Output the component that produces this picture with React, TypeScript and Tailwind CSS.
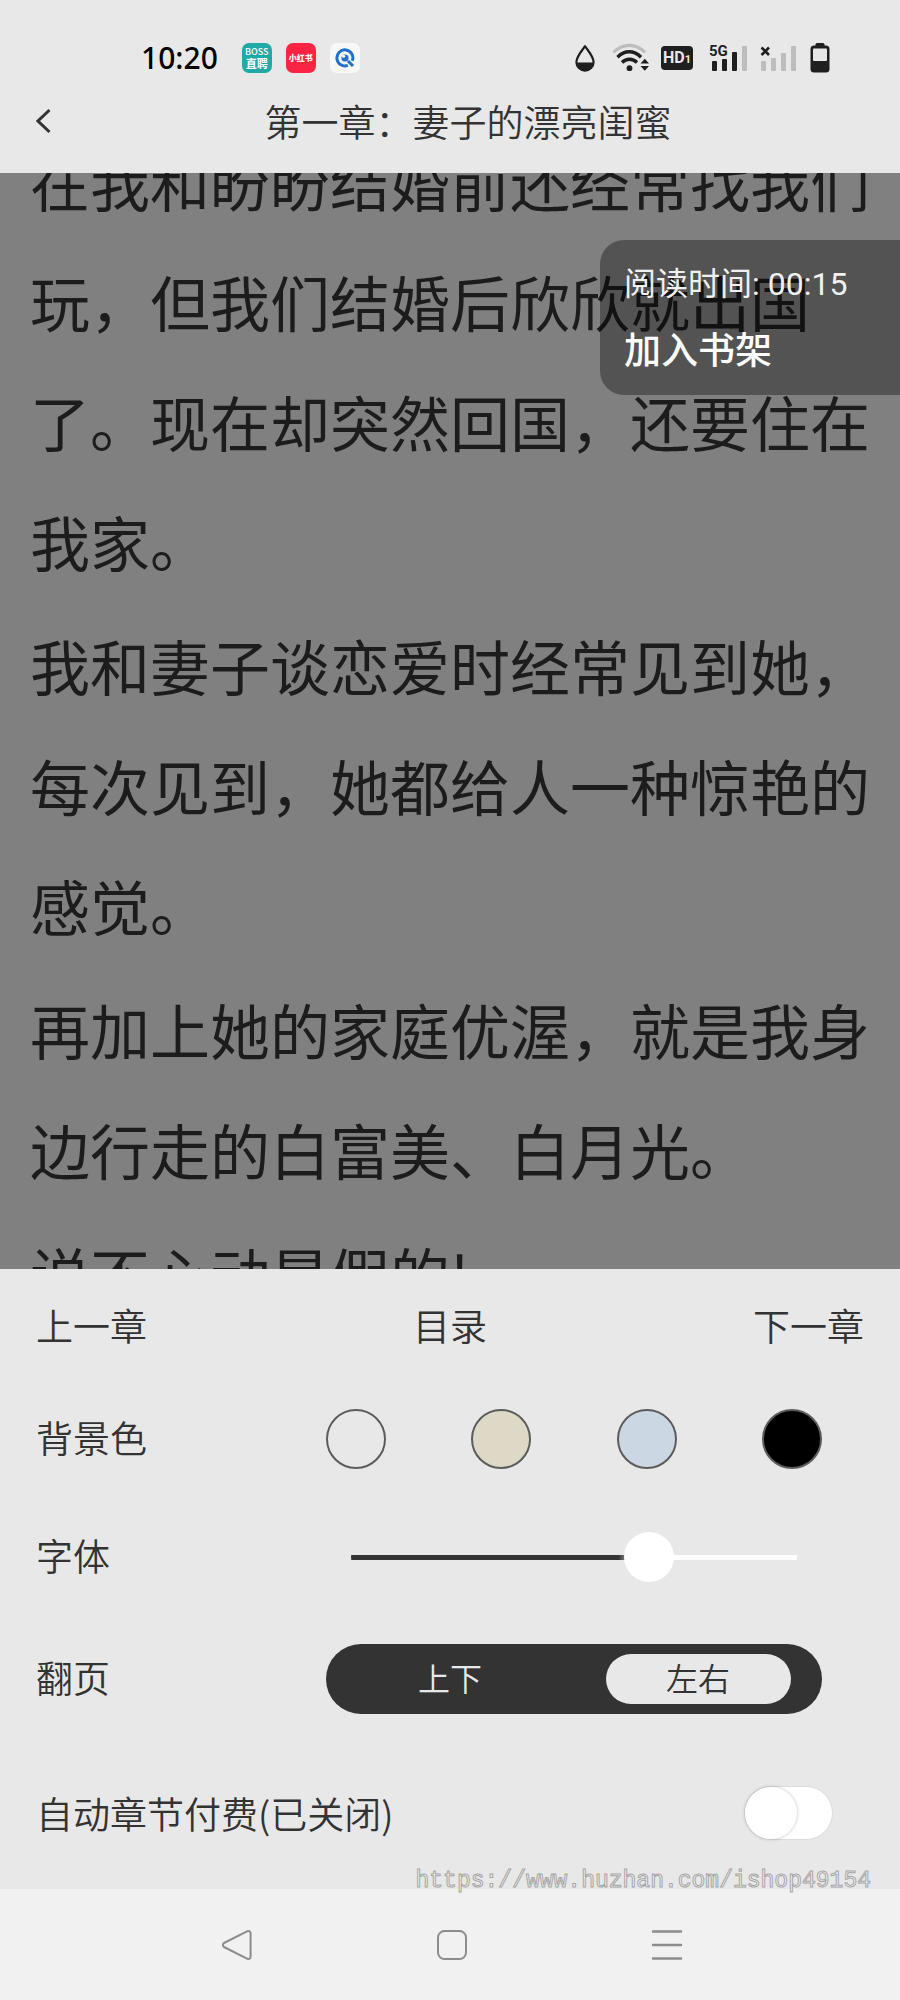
import { useState } from "react";

const paragraphs = [
  "在我和盼盼结婚前还经常找我们玩，但我们结婚后欣欣就出国了。现在却突然回国，还要住在我家。",
  "我和妻子谈恋爱时经常见到她，每次见到，她都给人一种惊艳的感觉。",
  "再加上她的家庭优渥，就是我身边行走的白富美、白月光。",
  "说不心动是假的!",
];

const backgrounds = [
  { name: "默认", className: "bg-[#e8e8e8]" },
  { name: "米色", className: "bg-[#ded9c6]" },
  { name: "浅蓝", className: "bg-[#ccd7e4]" },
  { name: "黑色", className: "bg-black" },
];

const StatusBar = () => {
  return (
    <div className="flex items-center justify-between h-[84px] pt-8 pl-[141px] pr-[70px]">
      <div className="flex items-center">
        <span className="text-[30px] leading-8 font-medium text-black font-['Noto_Sans',sans-serif]">
          10:20
        </span>
        <div className="flex gap-[14px] ml-6">
          <div className="size-[30px] rounded-[7px] bg-[#1fa9a7] text-white text-center flex flex-col justify-center">
            <span className="text-[9px] leading-[10px] font-medium">BOSS</span>
            <span className="text-[11px] leading-[13px] font-bold">直聘</span>
          </div>
          <div className="size-[30px] rounded-[7px] bg-[#fb2442] text-white text-[8px] font-black flex items-center justify-center">
            小红书
          </div>
          <div className="size-[30px] rounded-[7px] bg-[#f8f8f8] flex items-center justify-center">
            <svg width="20" height="20" viewBox="0 0 20 20" fill="none">
              <path
                d="M12.8 17.3A8 8 0 1 1 17.3 12.8"
                stroke="#1f6fd0"
                strokeWidth="3"
              />
              <path d="M13 13L18 18" stroke="#1f6fd0" strokeWidth="3" />
              <circle cx="10" cy="10" r="3.6" fill="#1f6fd0" />
              <circle cx="8.6" cy="8.2" r="1.6" fill="#f8f8f8" />
            </svg>
          </div>
        </div>
      </div>

      <div className="flex items-center">
        <svg width="22" height="30" viewBox="0 0 22 30" fill="none">
          <path
            d="M11 3.2C8 7.6 2.4 13.6 2.4 19A8.6 8.6 0 0 0 19.6 19C19.6 13.6 14 7.6 11 3.2Z"
            stroke="#1f1f1f"
            strokeWidth="2.2"
            strokeLinejoin="round"
          />
          <path d="M2.4 19.4H19.6A8.6 8.6 0 0 1 2.4 19.4Z" fill="#1f1f1f" />
        </svg>
        <svg
          className="ml-4"
          width="38"
          height="30"
          viewBox="0 0 38 30"
          fill="none"
        >
          <path
            d="M1.5 9.5C10.5 0 24 0 33 9.5"
            stroke="#bdbdbd"
            strokeWidth="3.2"
          />
          <path
            d="M5.5 14.2C12.5 7 22 7 29 14.2"
            stroke="#1f1f1f"
            strokeWidth="3.4"
          />
          <path
            d="M10 19.4C14.4 15.2 20.6 15.2 25 19.4"
            stroke="#1f1f1f"
            strokeWidth="3.4"
          />
          <circle cx="17.5" cy="25.2" r="2.9" fill="#1f1f1f" />
          <path d="M28.5 20.5L32.8 15.8L37 20.5Z" fill="#1f1f1f" />
          <path d="M28.5 23L32.8 27.8L37 23Z" fill="#1f1f1f" />
        </svg>
        <div className="ml-[11px] w-8 h-6 rounded-[4px] bg-[#1f1f1f] text-[#e8e8e8] flex items-baseline justify-center font-['Roboto',sans-serif] font-bold">
          <span className="text-[16px] leading-6">HD</span>
          <span className="text-[11px] leading-6">1</span>
        </div>
        <div className="relative ml-4 w-[39px] h-[30px]">
          <span className="absolute left-0 top-0 text-[15px] leading-4 font-bold text-[#1f1f1f] font-['Roboto',sans-serif]">
            5G
          </span>
          <svg width="39" height="30" viewBox="0 0 39 30">
            <rect x="3" y="18" width="5" height="10" rx="1" fill="#1f1f1f" />
            <rect x="13" y="16" width="5" height="12" rx="1" fill="#1f1f1f" />
            <rect x="23" y="9" width="5" height="19" rx="1" fill="#1f1f1f" />
            <rect x="33" y="3" width="5" height="25" rx="1" fill="#bdbdbd" />
          </svg>
        </div>
        <svg className="ml-3" width="38" height="30" viewBox="0 0 38 30">
          <path
            d="M1.5 4.5L9 12M9 4.5L1.5 12"
            stroke="#1f1f1f"
            strokeWidth="2.6"
          />
          <rect x="1" y="18" width="5" height="10" rx="1" fill="#bdbdbd" />
          <rect x="11" y="15" width="5" height="13" rx="1" fill="#bdbdbd" />
          <rect x="21" y="10" width="5" height="18" rx="1" fill="#bdbdbd" />
          <rect x="31" y="3" width="5" height="25" rx="1" fill="#bdbdbd" />
        </svg>
        <svg className="ml-3" width="20" height="30" viewBox="0 0 20 30">
          <rect x="5.5" y="0" width="9" height="5" rx="1.5" fill="#1f1f1f" />
          <rect x="0.5" y="2.5" width="19" height="27" rx="3.5" fill="#1f1f1f" />
          <rect x="3" y="5.5" width="14" height="12.5" rx="1" fill="#e8e8e8" />
        </svg>
      </div>
    </div>
  );
};

const Reader = () => {
  return (
    <main className="relative flex-1 min-h-0 overflow-hidden bg-[#808080]">
      <article className="-mt-[52px] px-[30px] flex flex-col gap-1 text-[60px] leading-[120px] text-[#1c1c1c]">
        {paragraphs.map((text, index) => (
          <p key={index}>{text}</p>
        ))}
      </article>
      <div className="absolute right-0 top-[67px] w-[300px] h-[155px] pl-6 pt-5 rounded-l-3xl bg-black/35 text-white">
        <p className="text-[32px] leading-[48px] text-[#f0f0f0] font-['Roboto','Noto_Sans_CJK_SC',sans-serif]">
          阅读时间: 00:15
        </p>
        <button className="block mt-3 text-[37px] leading-[56px] font-medium">
          加入书架
        </button>
      </div>
    </main>
  );
};

const SettingsPanel = () => {
  const [background, setBackground] = useState("");
  const [fontSize, setFontSize] = useState(69);
  const [mode, setMode] = useState("左右");
  const [autoPay, setAutoPay] = useState(false);

  return (
    <section className="relative bg-[#e8e8e8] pl-9 text-[37px] leading-[56px] font-[350]">
      <div className="grid grid-cols-3 items-center h-29 pr-9">
        <button className="pb-1 text-left">上一章</button>
        <button className="pb-1 text-center">目录</button>
        <button className="pb-1 text-right">下一章</button>
      </div>

      <div className="flex items-center justify-between h-27 pr-[78px]">
        <span id="bg-label" className="pb-1">
          背景色
        </span>
        <div
          role="radiogroup"
          aria-labelledby="bg-label"
          className="flex justify-between w-[496px]"
        >
          {backgrounds.map((item) => (
            <input
              key={item.name}
              type="radio"
              name="background"
              aria-label={item.name}
              checked={background === item.name}
              onChange={() => setBackground(item.name)}
              className={`appearance-none size-15 rounded-full border-2 border-[#5c5c5c] ${item.className}`}
            />
          ))}
        </div>
      </div>

      <div className="flex items-center justify-between h-32 pr-[78px]">
        <label htmlFor="font-size" className="pb-1">
          字体
        </label>
        <div className="w-[496px] px-[25px] flex">
          <input
            id="font-size"
            type="range"
            min={0}
            max={100}
            value={fontSize}
            onChange={(e) => setFontSize(Number(e.target.value))}
            style={{
              backgroundImage: `linear-gradient(to right, #333 ${fontSize - 9}%, #fff ${fontSize - 5}%)`,
            }}
            className="appearance-none w-full h-[50px] rounded-full bg-[length:100%_5px] bg-center bg-no-repeat [&::-webkit-slider-thumb]:appearance-none [&::-webkit-slider-thumb]:size-[50px] [&::-webkit-slider-thumb]:rounded-full [&::-webkit-slider-thumb]:bg-white"
          />
        </div>
      </div>

      <div className="flex items-center justify-between h-29 pr-[78px]">
        <span className="pb-1">翻页</span>
        <div className="grid grid-cols-2 items-center justify-items-center w-[496px] h-[70px] rounded-full bg-[#333] text-[32px] leading-[46px]">
          {["上下", "左右"].map((item) => (
            <button
              key={item}
              onClick={() => setMode(item)}
              className={
                mode === item
                  ? "w-[185px] pb-1 rounded-full bg-[#e8e8e8] text-[#333]"
                  : "w-[185px] pb-1 rounded-full text-[#e8e8e8]"
              }
            >
              {item}
            </button>
          ))}
        </div>
      </div>

      <div className="flex items-center justify-between h-38 pr-[67px]">
        <label htmlFor="auto-pay">自动章节付费(已关闭)</label>
        <input
          id="auto-pay"
          type="checkbox"
          role="switch"
          checked={autoPay}
          onChange={(e) => setAutoPay(e.target.checked)}
          className="appearance-none flex w-[89px] h-[54px] rounded-full border border-[#dcdcdc] bg-white checked:bg-[#333] checked:justify-end before:size-[52px] before:rounded-full before:bg-white before:shadow-[0_0_3px_1px_rgba(0,0,0,0.15)]"
        />
      </div>

      <span className="absolute right-[29px] -bottom-1 text-[23px] leading-6 font-normal text-[#f4f4f4] font-['Liberation_Mono',monospace] [-webkit-text-stroke:1px_#a6a6a6]">
        https://www.huzhan.com/ishop49154
      </span>
    </section>
  );
};

const NavBar = () => {
  return (
    <nav className="flex items-center justify-center gap-[183px] h-[111px] pl-1 bg-[#f1f1f1] text-[#8c8c8c]">
      <button aria-label="返回">
        <svg width="32" height="32" viewBox="0 0 32 32" fill="none">
          <path
            d="M26.5 2.2L3 14Q0.8 16 3 18L26.5 29.8Q29.6 30.4 29.6 27.5V4.5Q29.6 1.6 26.5 2.2Z"
            stroke="currentColor"
            strokeWidth="2"
            strokeLinejoin="round"
          />
        </svg>
      </button>
      <button aria-label="主页">
        <svg width="32" height="32" viewBox="0 0 32 32" fill="none">
          <rect
            x="2"
            y="2"
            width="28"
            height="28"
            rx="6.5"
            stroke="currentColor"
            strokeWidth="2"
          />
        </svg>
      </button>
      <button aria-label="菜单">
        <svg width="32" height="32" viewBox="0 0 32 32" fill="none">
          <path
            d="M2 2.5H30M2 16H30M2 29.5H30"
            stroke="currentColor"
            strokeWidth="2.4"
            strokeLinecap="round"
          />
        </svg>
      </button>
    </nav>
  );
};

const App = () => {
  return (
    <div className="flex flex-col h-screen text-[#333] font-['Noto_Sans_CJK_SC',sans-serif]">
      <header className="bg-[#e8e8e8] pb-[15px]">
        <StatusBar />
        <div className="relative flex items-center justify-center h-[74px]">
          <button aria-label="返回" className="absolute left-8 p-1">
            <svg width="16" height="26" viewBox="0 0 16 26" fill="none">
              <path d="M13.5 2L2 13L13.5 24" stroke="#333" strokeWidth="3" />
            </svg>
          </button>
          <h1 className="pl-9 text-[37px] leading-[56px] font-[350]">
            第一章：妻子的漂亮闺蜜
          </h1>
        </div>
      </header>
      <Reader />
      <SettingsPanel />
      <NavBar />
    </div>
  );
};

export default App;
